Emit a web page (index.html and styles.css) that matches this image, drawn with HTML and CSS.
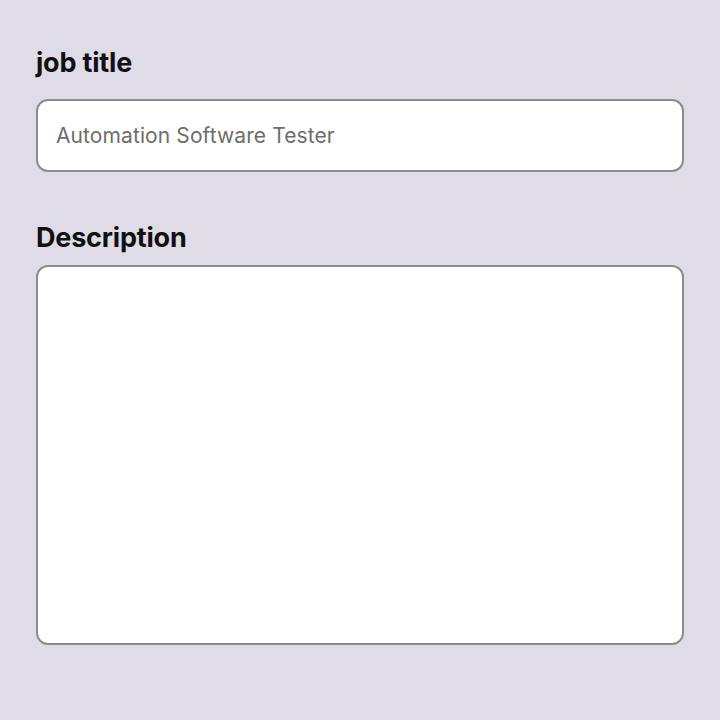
FILE: index.html
```html
<!DOCTYPE html>
<html>
<head>
<meta charset="utf-8">
<link rel="stylesheet" href="styles.css">
</head>
<body>
<div class="form">
  <div class="field">
    <label class="label" for="job">job title</label>
    <input class="input" id="job" type="text" placeholder="Automation Software Tester">
  </div>
  <div class="field field-area">
    <label class="label" for="desc">Description</label>
    <textarea class="textarea" id="desc"></textarea>
  </div>
</div>
</body>
</html>
```
FILE: styles.css
```css
html, body {
  margin: 0;
  padding: 0;
  background: #dfdce8;
  font-family: Inter, "Noto Sans", sans-serif;
}
.form {
  display: flex;
  flex-direction: column;
  gap: 49px;
  padding: 46px 36px 0 36px;
}
.field {
  display: flex;
  flex-direction: column;
  gap: 20px;
}
.field-area {
  gap: 11px;
}
.label {
  font-size: 27px;
  font-weight: 700;
  line-height: 33px;
  color: #111;
  letter-spacing: -0.2px;
}
.input, .textarea {
  box-sizing: border-box;
  width: 648px;
  border: 2px solid #8c8c8e;
  border-radius: 12px;
  background: #fff;
  font-family: inherit;
  margin: 0;
  outline: none;
}
.input {
  height: 73px;
  padding: 0 18px;
  font-size: 21px;
  letter-spacing: 0.1px;
}
.input::placeholder {
  color: #6d6d6d;
}
.textarea {
  height: 380px;
  resize: none;
}
```
